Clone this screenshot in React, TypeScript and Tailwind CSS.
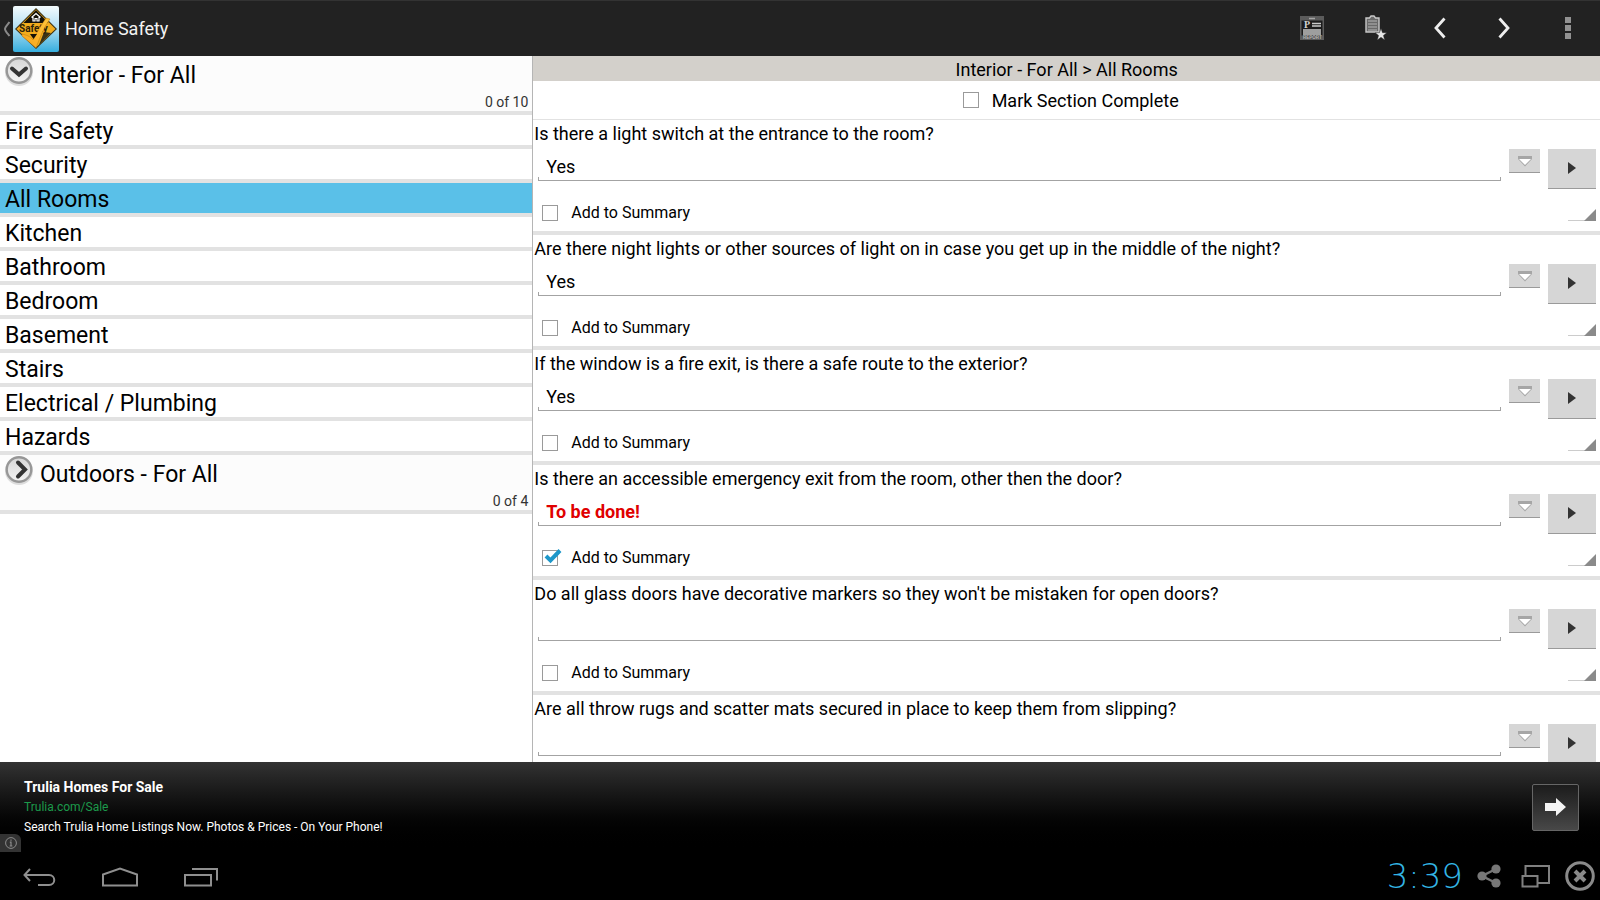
import React, { useState } from 'react';
import clsx from 'clsx';

interface Question {
  id: number;
  text: string;
  answer: string;
  summary: boolean;
}

const rooms = [
  'Fire Safety',
  'Security',
  'All Rooms',
  'Kitchen',
  'Bathroom',
  'Bedroom',
  'Basement',
  'Stairs',
  'Electrical / Plumbing',
  'Hazards',
];

const initialQuestions: Question[] = [
  { id: 1, text: 'Is there a light switch at the entrance to the room?', answer: 'Yes', summary: false },
  {
    id: 2,
    text: 'Are there night lights or other sources of light on in case you get up in the middle of the night?',
    answer: 'Yes',
    summary: false,
  },
  { id: 3, text: 'If the window is a fire exit, is there a safe route to the exterior?', answer: 'Yes', summary: false },
  {
    id: 4,
    text: 'Is there an accessible emergency exit from the room, other then the door?',
    answer: 'To be done!',
    summary: true,
  },
  {
    id: 5,
    text: "Do all glass doors have decorative markers so they won't be mistaken for open doors?",
    answer: '',
    summary: false,
  },
  {
    id: 6,
    text: 'Are all throw rugs and scatter mats secured in place to keep them from slipping?',
    answer: '',
    summary: false,
  },
];

const AppLogo = () => (
  <svg width="46" height="46" viewBox="0 0 46 46">
    <defs>
      <linearGradient id="sky" x1="0" y1="0" x2="0" y2="1">
        <stop offset="0" stopColor="#f4fbfe" />
        <stop offset="0.45" stopColor="#b5e0f3" />
        <stop offset="1" stopColor="#36aede" />
      </linearGradient>
      <linearGradient id="tick" x1="1" y1="0" x2="0" y2="1">
        <stop offset="0" stopColor="#ffc53d" />
        <stop offset="1" stopColor="#f7a51c" />
      </linearGradient>
    </defs>
    <rect width="46" height="46" rx="2" fill="url(#sky)" />
    <path d="M23 2 44 23 23 43 2 23Z" fill="#3b3216" />
    <path d="M23 3.500 42.500 23 23 41.500 3.500 23Z" fill="#f2ac1d" />
    <path d="M23 4 35.500 17H10.500Z" fill="#151208" />
    <path d="m18.500 11.500 4.500-4 4.500 4M20 11v4h2v-2.500h2V15h2v-4" fill="none" stroke="#fff" strokeWidth="1.200" />
    <path d="M38 27 26 39l5-13Z" fill="#3b3216" />
    <text x="6" y="26" fontFamily="Roboto, sans-serif" fontSize="10" fontWeight="700" fill="#2b2208">
      Safety
    </text>
    <path d="M9 28c4 1 8 2 11 6 4-8 9-16 13-22l4 1c-6 8-10 18-14 29L9 30Z" fill="url(#tick)" stroke="#a86b08" strokeWidth="0.400" />
    <path d="M17 28h7l-3.500 5Z" fill="#151208" />
  </svg>
);

const ReportIcon = () => (
  <svg width="24" height="24" viewBox="0 0 24 24">
    <rect width="24" height="24" fill="#5c5c5c" />
    <rect x="1.500" y="4.500" width="21" height="15" fill="#1c1c1c" />
    <path d="M9 2.500h6" stroke="#a5a5a5" strokeWidth="1.500" />
    <text x="4" y="12" fontFamily="Liberation Serif, serif" fontSize="10" fontWeight="700" fill="#d5d5d5">
      P
    </text>
    <path d="M12 7.500h9M12 10h9M3 14h18M3 16h18M3 18h18" stroke="#c9c9c9" strokeWidth="1.700" />
    <text x="3" y="23.300" fontFamily="Liberation Sans, sans-serif" fontSize="4.500" fontWeight="700" fill="#b5b5b5">
      REPORT
    </text>
  </svg>
);

const ClipboardStarIcon = () => (
  <svg width="22" height="26" viewBox="0 0 22 26">
    <path d="M1 3h3.500L6 1h3l1.500 2H14v14H1Z" fill="#696969" stroke="#c8c8c8" strokeWidth="1.400" />
    <path d="M3 6h9M3 9h9M3 12h9M3 15h9" stroke="#b5b5b5" strokeWidth="1.200" />
    <path d="m16 13.500 1.500 4.200h4.300l-3.400 2.700 1.300 4.500L16 22.300l-3.700 2.600 1.300-4.500-3.400-2.700h4.300Z" fill="#e6e6e6" stroke="#222" strokeWidth="0.400" />
  </svg>
);

const GroupIcon = ({ open }: { open: boolean }) => (
  <svg width="30" height="30" viewBox="0 0 30 30">
    <defs>
      <linearGradient id="knob" x1="0" y1="0" x2="0" y2="1">
        <stop offset="0" stopColor="#d6d6d6" />
        <stop offset="1" stopColor="#f4f4f4" />
      </linearGradient>
    </defs>
    <circle cx="15" cy="16" r="13" fill="none" stroke="#ddd" strokeWidth="2" />
    <circle cx="15" cy="14.500" r="12.300" fill="url(#knob)" stroke="#979797" strokeWidth="2.400" />
    <path
      d={open ? 'm8 12.500 7 6 7-6' : 'm14 7.500 7 7-7 7'}
      fill="none"
      stroke="#333"
      strokeWidth="4"
      strokeLinecap="round"
    />
  </svg>
);

interface CheckProps {
  label: string;
  checked: boolean;
  onChange: (checked: boolean) => void;
  className?: string;
}

const Check = ({ label, checked, onChange, className }: CheckProps) => (
  <label className={clsx('flex items-center', className)}>
    <span className="relative flex">
      <input
        type="checkbox"
        checked={checked}
        onChange={(e) => onChange(e.target.checked)}
        className="peer size-4 appearance-none border border-[#9a9a9a] bg-white"
      />
      <svg className="absolute -top-1 left-0 hidden peer-checked:block" width="20" height="20" viewBox="0 0 20 20">
        <path d="m4 10 4.500 4.500L18 4.500" fill="none" stroke="#1e97c9" strokeWidth="4" />
      </svg>
    </span>
    {label}
  </label>
);

const GroupRow = ({ title, count, open }: { title: string; count: string; open: boolean }) => (
  <button type="button" className="relative flex h-[59px] w-full border-b-4 border-[#e2e2e2] bg-[#fcfcfc] pl-1 text-left">
    <GroupIcon open={open} />
    <span className="pt-1 pl-1.5 text-[23px] leading-8">{title}</span>
    <span className="absolute right-1 bottom-0 text-[14px] leading-[18px] text-[#333]">{count}</span>
  </button>
);

interface QuestionRowProps {
  question: Question;
  onChange: (next: Question) => void;
}

const QuestionRow = ({ question, onChange }: QuestionRowProps) => {
  const inputId = `answer-${question.id}`;
  return (
    <li className="flex h-[115px] shrink-0 flex-col border-b-4 border-[#e2e2e2] pl-px">
      <label htmlFor={inputId} className="h-7 pt-0.5 text-[18px] leading-6">
        {question.text}
      </label>
      <div className="flex h-11 items-start pt-px pr-1 pl-1">
        <div className="relative mr-2 flex-1">
          <input
            id={inputId}
            type="text"
            value={question.answer}
            onChange={(e) => onChange({ ...question, answer: e.target.value })}
            className={clsx(
              'block h-8 w-full border-b border-[#a3a3a3] bg-transparent px-2 pt-1 pb-px text-[18px] leading-6 outline-none',
              question.summary && 'font-bold text-[#e00000]',
            )}
          />
          <span className="absolute bottom-0 left-0 h-1 w-px bg-[#a3a3a3]" />
          <span className="absolute right-0 bottom-0 h-1 w-px bg-[#a3a3a3]" />
        </div>
        <button
          type="button"
          aria-label="Choose answer"
          className="mr-2 flex h-6 w-[31px] items-center justify-center border-b border-[#9a9a9a] bg-[#d6d6d6]"
        >
          <svg width="16" height="12" viewBox="0 0 16 12">
            <path d="M1 1h14v3L8 11.500 1 4Z" fill="#a6a6a6" />
            <path d="M2 4h12L8 10Z" fill="#fff" />
          </svg>
        </button>
        <button
          type="button"
          aria-label="Open question"
          className="flex h-10 w-12 items-center justify-center border-b border-[#9a9a9a] bg-[#d6d6d6] pb-0.5"
        >
          <svg width="8" height="12" viewBox="0 0 8 12">
            <path d="M0 0 8 6 0 12Z" fill="#333" />
          </svg>
        </button>
      </div>
      <div className="flex flex-1 items-start justify-between pr-1 pl-2">
        <Check
          label="Add to Summary"
          checked={question.summary}
          onChange={(summary) => onChange({ ...question, summary })}
          className="gap-[13px] pt-2 text-[16px] leading-[26px]"
        />
        <svg className="mt-4" width="28" height="13" viewBox="0 0 28 13">
          <path d="M0 12.500h28" stroke="#ccc" />
          <path d="M16 13 28 1v12Z" fill="#8a8a8a" />
        </svg>
      </div>
    </li>
  );
};

const TopBar = () => (
  <header className="flex h-14 shrink-0 items-center border-t border-[#333] bg-[#222] text-[#f3f3f3]">
    <button type="button" aria-label="Up" className="flex items-center gap-0.5 pl-[3px]">
      <svg width="8" height="16" viewBox="0 0 8 16">
        <path d="M6.500 1C5 3 2 6 2 8s3 5 4.500 7" fill="none" stroke="#8a8a8a" strokeWidth="2" />
      </svg>
      <AppLogo />
    </button>
    <h1 className="flex-1 pl-1.5 text-[18px]">Home Safety</h1>
    <nav className="flex items-center pb-0.5">
      <button type="button" aria-label="Report" className="flex h-12 w-16 items-center justify-center">
        <ReportIcon />
      </button>
      <button type="button" aria-label="Summary" className="flex h-12 w-16 items-center justify-center">
        <ClipboardStarIcon />
      </button>
      <button type="button" aria-label="Previous" className="flex h-12 w-16 items-center justify-center">
        <svg width="12" height="22" viewBox="0 0 12 22">
          <path d="M10.500 1.500 2 11l8.500 9.500" fill="none" stroke="#eee" strokeWidth="2.800" />
        </svg>
      </button>
      <button type="button" aria-label="Next" className="flex h-12 w-16 items-center justify-center">
        <svg width="12" height="22" viewBox="0 0 12 22">
          <path d="M1.500 1.500 10 11l-8.500 9.500" fill="none" stroke="#eee" strokeWidth="2.800" />
        </svg>
      </button>
      <button type="button" aria-label="More" className="flex h-12 w-16 items-center justify-center">
        <svg width="6" height="22" viewBox="0 0 6 22">
          <path d="M0 0h6v6H0ZM0 8h6v6H0ZM0 16h6v6H0Z" fill="#929292" />
        </svg>
      </button>
    </nav>
  </header>
);

const AdBanner = () => (
  <aside className="relative flex h-[90px] shrink-0 items-center justify-between bg-linear-to-b from-[#333] to-black pr-[21px] pl-6">
    <div className="text-white">
      <p className="text-[14px] leading-5 font-bold">Trulia Homes For Sale</p>
      <a href="#" className="block text-[12px] leading-5 text-[#1c9a4b]">
        Trulia.com/Sale
      </a>
      <p className="text-[12px] leading-5">Search Trulia Home Listings Now. Photos &amp; Prices - On Your Phone!</p>
    </div>
    <button
      type="button"
      aria-label="Open ad"
      className="flex size-[47px] items-center justify-center rounded-xs border border-[#666] bg-linear-to-b from-[#1c1c1c] to-[#484848]"
    >
      <svg width="21" height="18" viewBox="0 0 21 18">
        <path d="M0 5h11V0l10 9-10 9v-5H0Z" fill="#f4f4f4" />
      </svg>
    </button>
    <button
      type="button"
      aria-label="Ad info"
      className="absolute bottom-0 left-0 flex h-[18px] w-[21px] items-center justify-center rounded-tr-md bg-[#333]"
    >
      <svg width="12" height="12" viewBox="0 0 12 12">
        <circle cx="6" cy="6" r="5.400" fill="none" stroke="#8c8c8c" />
        <path d="M6 2.500v1.300M4.800 5.200H6v3.600M4.600 9h2.800" fill="none" stroke="#8c8c8c" strokeWidth="1.200" />
      </svg>
    </button>
  </aside>
);

const SystemBar = () => (
  <footer className="flex h-12 shrink-0 items-center justify-between bg-black pr-[5px] pl-[23px]">
    <div className="flex items-center gap-11 pt-0.5">
      <button type="button" aria-label="Back">
        <svg width="34" height="20" viewBox="0 0 34 20">
          <path d="M7 2 1.500 8 7 14M2 8h24c7 0 7 10 0 10H15" fill="none" stroke="#8f8f8f" strokeWidth="2" />
        </svg>
      </button>
      <button type="button" aria-label="Home">
        <svg width="38" height="20" viewBox="0 0 38 20">
          <path d="M2 18.500V7.500L19 1.500l17 6v11Z" fill="none" stroke="#8f8f8f" strokeWidth="2" />
        </svg>
      </button>
      <button type="button" aria-label="Recent apps">
        <svg width="36" height="20" viewBox="0 0 36 20">
          <path d="M2 8h26v10.500H2ZM9 2h25v11.500" fill="none" stroke="#8f8f8f" strokeWidth="2" />
        </svg>
      </button>
    </div>
    <div className="flex items-center">
      <time className="mr-3.5 font-['DejaVu_Sans',sans-serif] text-[34px] leading-10 font-extralight text-[#33b5e5]">3:39</time>
      <button type="button" aria-label="Share" className="mr-5">
        <svg width="24" height="24" viewBox="0 0 24 24">
          <path d="M19 5 5 12l14 7" fill="none" stroke="#777" strokeWidth="2.500" />
          <circle cx="5" cy="12" r="4.600" fill="#777" />
          <circle cx="19" cy="5" r="4.600" fill="#777" />
          <circle cx="19" cy="19" r="4.600" fill="#777" />
        </svg>
      </button>
      <button type="button" aria-label="Small apps" className="mr-3.5">
        <svg width="30" height="24" viewBox="0 0 30 24">
          <path d="M4.500 11V2H28v17H17M1.500 12h15v10.500h-15Z" fill="none" stroke="#808080" strokeWidth="2" />
        </svg>
      </button>
      <button type="button" aria-label="Close">
        <svg width="30" height="30" viewBox="0 0 30 30">
          <circle cx="15" cy="15" r="13.300" fill="none" stroke="#8a8a8a" strokeWidth="3" />
          <path d="m10 10 10 10M20 10 10 20" stroke="#8a8a8a" strokeWidth="4" />
        </svg>
      </button>
    </div>
  </footer>
);

export default function App() {
  const [room, setRoom] = useState('All Rooms');
  const [complete, setComplete] = useState(false);
  const [questions, setQuestions] = useState(initialQuestions);

  const updateQuestion = (next: Question) => {
    setQuestions(questions.map((q) => (q.id === next.id ? next : q)));
  };

  return (
    <div className="flex h-screen flex-col bg-white font-[Roboto,sans-serif] text-black">
      <TopBar />
      <main className="flex min-h-0 flex-1 overflow-hidden">
        <section className="w-1/3 border-r border-[#b5b5b5]">
          <GroupRow title="Interior - For All" count="0 of 10" open />
          <ul>
            {rooms.map((name) => (
              <li key={name} className="border-b-4 border-[#e2e2e2]">
                <button
                  type="button"
                  onClick={() => setRoom(name)}
                  className={clsx(
                    'block h-[30px] w-full pt-0.5 pl-[5px] text-left text-[23px] leading-[30px]',
                    name === room && 'bg-[#5ac0e8]',
                  )}
                >
                  {name}
                </button>
              </li>
            ))}
          </ul>
          <GroupRow title="Outdoors - For All" count="0 of 4" open={false} />
        </section>
        <section className="flex min-w-0 flex-1 flex-col">
          <h2 className="h-[25px] shrink-0 bg-[#d3d0cb] text-center text-[18px] leading-7">Interior - For All &gt; {room}</h2>
          <Check
            label="Mark Section Complete"
            checked={complete}
            onChange={setComplete}
            className="h-[39px] shrink-0 justify-center gap-[13px] border-b border-[#e2e2e2] pl-2 text-[18px]"
          />
          <ul className="flex min-h-0 flex-1 flex-col overflow-y-auto [scrollbar-width:none]">
            {questions.map((question) => (
              <QuestionRow key={question.id} question={question} onChange={updateQuestion} />
            ))}
          </ul>
        </section>
      </main>
      <AdBanner />
      <SystemBar />
    </div>
  );
}
